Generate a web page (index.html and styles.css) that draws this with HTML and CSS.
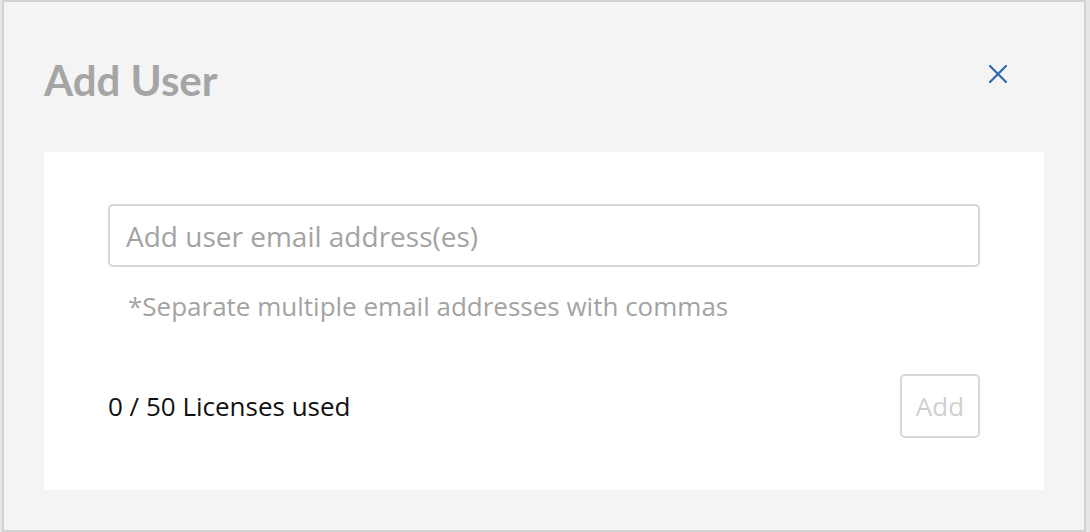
FILE: index.html
```html
<!DOCTYPE html>
<html lang="en">
<head>
<meta charset="utf-8">
<title>Add User</title>
<link rel="stylesheet" href="styles.css">
</head>
<body>
<div class="modal">
  <div class="modal-header">
    <h1 class="modal-title">Add User</h1>
    <button class="close-btn" aria-label="Close">
      <svg width="18" height="18" viewBox="0 0 18 18"><path d="M1 1 L17 17 M17 1 L1 17" stroke="#2e69ad" stroke-width="2.2" fill="none" stroke-linecap="square"/></svg>
    </button>
  </div>
  <div class="card">
    <input class="email-input" type="text" placeholder="Add user email address(es)">
    <p class="help">*Separate multiple email addresses with commas</p>
    <div class="footer-row">
      <span class="licenses">0 / 50 Licenses used</span>
      <button class="add-btn" disabled>Add</button>
    </div>
  </div>
</div>
</body>
</html>
```
FILE: styles.css
```css
html, body {
  margin: 0;
  padding: 0;
  height: 532px;
  overflow: hidden;
}
body {
  background: #e6e6e6;
  font-family: "Open Sans", "Liberation Sans", sans-serif;
}
.modal {
  margin-left: 2px;
  width: 1080px;
  height: 528px;
  box-sizing: content-box;
  background: #f4f4f4;
  border: 2px solid #d2d2d2;
  padding: 0;
  display: flex;
  flex-direction: column;
}
.modal-header {
  display: flex;
  justify-content: space-between;
  align-items: flex-start;
  padding: 53px 40px 0 40px;
  height: 50px;
}
.modal-title {
  margin: 0;
  font-family: Lato, "Liberation Sans", sans-serif;
  font-weight: 700;
  font-size: 42px;
  line-height: 50px;
  color: #a5a5a5;
}
.close-btn {
  margin: 10px 37px 0 0;
  padding: 0;
  border: 0;
  background: none;
  width: 18px;
  height: 18px;
  display: block;
}
.close-btn svg { display: block; }
.card {
  margin: 47px 40px 0 40px;
  background: #ffffff;
  padding: 52px 64px 52px 64px;
}
.email-input {
  display: block;
  box-sizing: border-box;
  width: 100%;
  height: 63px;
  border: 2px solid #d6d6d6;
  border-radius: 5px;
  padding: 0 16px;
  font-family: "Open Sans", "Liberation Sans", sans-serif;
  font-size: 28px;
  color: #333;
  outline: none;
}
.email-input::placeholder { color: #a3a3a3; }
.help {
  margin: 24px 0 0 20px;
  font-size: 26px;
  line-height: 30px;
  color: #a3a3a3;
}
.footer-row {
  margin-top: 53px;
  display: flex;
  justify-content: space-between;
  align-items: center;
}
.licenses {
  font-size: 26px;
  color: #111;
}
.add-btn {
  width: 80px;
  height: 64px;
  box-sizing: border-box;
  border: 2px solid #d8d8d8;
  border-radius: 5px;
  background: #fff;
  font-family: "Open Sans", "Liberation Sans", sans-serif;
  font-size: 26px;
  color: #cfcfcf;
  padding: 0;
}
```
